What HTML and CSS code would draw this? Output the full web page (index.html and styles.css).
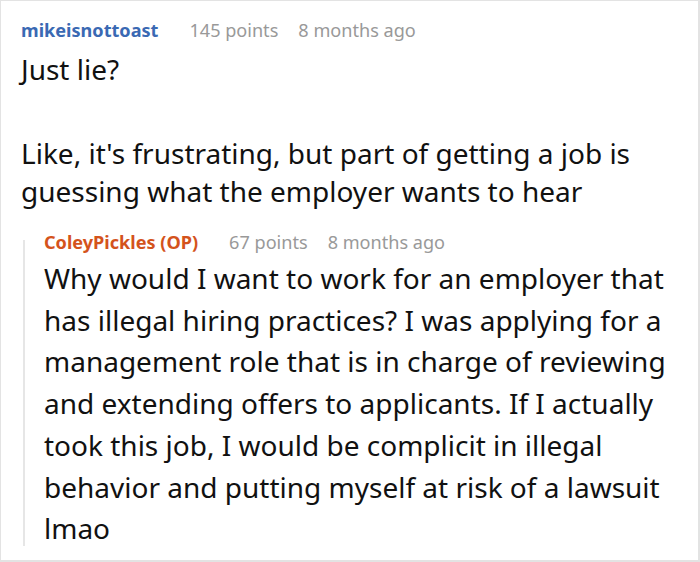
FILE: index.html
```html
<!DOCTYPE html>
<html>
<head>
<meta charset="utf-8">
<link rel="stylesheet" href="styles.css">
</head>
<body>
<div class="frame">
  <div class="comment">
    <div class="meta">
      <span class="author">mikeisnottoast</span>
      <span class="info">145 points</span>
      <span class="info">8 months ago</span>
    </div>
    <div class="body">
      <p>Just lie?</p>
      <p>Like, it's frustrating, but part of getting a job is guessing what the employer wants to hear</p>
    </div>
    <div class="reply">
      <div class="meta">
        <span class="author op">ColeyPickles (OP)</span>
        <span class="info">67 points</span>
        <span class="info">8 months ago</span>
      </div>
      <div class="body reply-body">
        <p>Why would I want to work for an employer that has illegal hiring practices? I was applying for a management role that is in charge of reviewing and extending offers to applicants. If I actually took this job, I would be complicit in illegal behavior and putting myself at risk of a lawsuit lmao</p>
      </div>
    </div>
  </div>
</div>
</body>
</html>
```

FILE: styles.css
```css
html, body {
  margin: 0;
  padding: 0;
  background: #fff;
}
body {
  font-family: "Noto Sans", sans-serif;
  color: #111;
}
.frame {
  width: 700px;
  height: 562px;
  box-sizing: border-box;
  border: 1px solid #e3e3e3;
  border-right-width: 2px;
  border-bottom-width: 2px;
  overflow: hidden;
}
.comment {
  padding: 17px 0 0 20px;
}
.meta {
  display: flex;
  gap: 20px;
  font-size: 18.1px;
  line-height: 24px;
  white-space: nowrap;
}
.author {
  font-weight: 700;
  color: #3a69b3;
  margin-right: 11px;
}
.author.op {
  color: #d4531c;
}
.info {
  color: #999;
}
.body {
  font-size: 28px;
  line-height: 38.5px;
  margin-top: 8px;
  padding-right: 30px;
}
.body p {
  margin: 0 0 45px 0;
}
.body p:last-child {
  margin-bottom: 0;
}
.reply {
  position: relative;
  margin-top: 19px;
  padding-left: 23px;
}
.reply::before {
  content: "";
  position: absolute;
  left: 2px;
  top: 10px;
  bottom: 4px;
  width: 2px;
  background: #e6e6e6;
}
.reply-body {
  line-height: 41.7px;
  margin-top: 4.5px;
  padding-right: 14px;
}
```
